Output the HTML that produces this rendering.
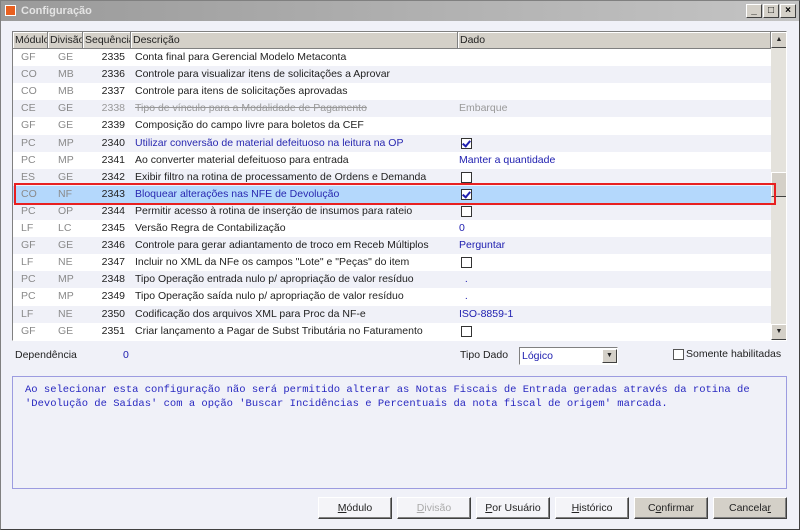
<!DOCTYPE html>
<html><head><meta charset="utf-8"><style>
*{box-sizing:border-box;margin:0;padding:0}
body{width:800px;height:530px;overflow:hidden;background:#f0f1f8;font-family:"Liberation Sans",sans-serif;font-size:10.5px;color:#222;position:relative}
.abs{position:absolute}
#win{left:0;top:0;width:800px;height:530px;border:1px solid #808080;border-right-color:#404040;border-bottom-color:#404040}
#title{left:1px;top:1px;width:798px;height:20px;background:linear-gradient(90deg,#9a9a9a,#c4c4c4);color:#e4e4e4;font-weight:bold;font-size:11px;line-height:20px;padding-left:20px}
.ticon{left:5px;top:5px;width:11px;height:11px;background:#e86020;border:1px solid #fff}
.tb{top:4px;width:16px;height:14px;background:#d4d0c8;border:1px solid;border-color:#fff #404040 #404040 #fff;font-size:10px;line-height:12px;text-align:center;color:#000;font-weight:bold}
#grid{left:12px;top:31px;width:775px;height:310px;border:1px solid;border-color:#808080 #fff #fff #808080;background:#fff;overflow:hidden}
.hd{top:0;height:17px;background:#d4d0c8;border-right:1px solid #808080;border-bottom:1px solid #808080;line-height:16px;padding-left:2px;box-shadow:inset 1px 1px #fff;white-space:nowrap;overflow:hidden}
.row{left:0;width:758px;height:17.1px;line-height:17px}
.row span{position:absolute;white-space:nowrap}
.c1{left:8px;color:#8a8a8a}.c2{left:45px;color:#8a8a8a}.c3{left:70px;width:42px;text-align:right}.c4{left:122px}.c5{left:446px;color:#2020b0}
.cb{position:absolute;left:448px;top:3px;width:11px;height:11px;border:1px solid #333;background:#fff}
.cb.on::after{content:"";position:absolute;left:2px;top:0px;width:3px;height:6px;border:solid #2020b0;border-width:0 2px 2px 0;transform:rotate(40deg)}
.btn{top:497px;width:74px;height:22px;border:1px solid;border-color:#fff #404040 #404040 #fff;background:#f4f4f8;text-align:center;line-height:20px;box-shadow:inset -1px -1px #808080}
</style></head><body>
<div id="win" class="abs"></div>
<div id="title" class="abs">Configuração</div>
<div class="abs ticon"></div>
<div class="abs tb" style="left:746px">_</div><div class="abs tb" style="left:763px">□</div><div class="abs tb" style="left:780px">×</div>
<div id="grid" class="abs">
<div class="abs hd" style="left:0;width:35px">Módulo</div>
<div class="abs hd" style="left:35px;width:35px">Divisão</div>
<div class="abs hd" style="left:70px;width:48px">Sequência</div>
<div class="abs hd" style="left:118px;width:327px">Descrição</div>
<div class="abs hd" style="left:445px;width:313px">Dado</div>
<div class="abs" style="left:758px;top:0;width:16px;height:310px;background:#e4e2dc"></div>
<div class="abs" style="left:758px;top:0;width:16px;height:16px;background:#d4d0c8;border:1px solid;border-color:#fff #404040 #404040 #fff;font-size:7px;text-align:center;line-height:14px">▲</div>
<div class="abs" style="left:758px;top:140px;width:16px;height:25px;background:#d4d0c8;border:1px solid;border-color:#fff #404040 #404040 #fff"></div>
<div class="abs" style="left:758px;top:292px;width:16px;height:16px;background:#d4d0c8;border:1px solid;border-color:#fff #404040 #404040 #fff;font-size:7px;text-align:center;line-height:14px">▼</div>
<div id="rows"></div>
</div>
<div class="abs" style="left:14px;top:183px;width:762px;height:22px;border:2px solid #e82020"></div>
<div class="abs" style="left:15px;top:349px">Dependência</div>
<div class="abs" style="left:123px;top:349px;color:#2020b0">0</div>
<div class="abs" style="left:460px;top:349px">Tipo Dado</div>
<div class="abs" style="left:519px;top:347px;width:99px;height:18px;background:#fff;border:1px solid;border-color:#808080 #fff #fff #808080;color:#2020b0;line-height:16px;padding-left:2px">Lógico</div>
<div class="abs" style="left:602px;top:349px;width:15px;height:14px;background:#d4d0c8;border:1px solid;border-color:#fff #404040 #404040 #fff;font-size:7px;text-align:center;line-height:12px">▼</div>
<div class="abs" style="left:673px;top:349px;width:11px;height:11px;border:1px solid #555;background:#fff"></div>
<div class="abs" style="left:686px;top:348px">Somente habilitadas</div>
<div class="abs" style="left:12px;top:376px;width:775px;height:113px;border:1px solid #9c9ce0;background:#f0f1f8;font-family:'Liberation Mono',monospace;font-size:10.5px;color:#2828c0;padding:6px 0 0 12px;line-height:14px;white-space:pre">Ao selecionar esta configuração não será permitido alterar as Notas Fiscais de Entrada geradas através da rotina de
'Devolução de Saídas' com a opção 'Buscar Incidências e Percentuais da nota fiscal de origem' marcada.</div>
<div class="abs btn" style="left:318px"><u>M</u>ódulo</div>
<div class="abs btn" style="left:397px;color:#aaa"><u>D</u>ivisão</div>
<div class="abs btn" style="left:476px"><u>P</u>or Usuário</div>
<div class="abs btn" style="left:555px"><u>H</u>istórico</div>
<div class="abs btn" style="left:634px;background:#d4d0c8">C<u>o</u>nfirmar</div>
<div class="abs btn" style="left:713px;background:#d4d0c8">Cancela<u>r</u></div>
<script>
var d=[["GF","GE","2335","Conta final para Gerencial Modelo Metaconta",""],
["CO","MB","2336","Controle para visualizar itens de solicitações a Aprovar",""],
["CO","MB","2337","Controle para itens de solicitações aprovadas",""],
["CE","GE","2338","Tipo de vínculo para a Modalidade de Pagamento","Embarque","s"],
["GF","GE","2339","Composição do campo livre para boletos da CEF",""],
["PC","MP","2340","Utilizar conversão de material defeituoso na leitura na OP","#1","b"],
["PC","MP","2341","Ao converter material defeituoso para entrada","Manter a quantidade"],
["ES","GE","2342","Exibir filtro na rotina de processamento de Ordens e Demanda","#0"],
["CO","NF","2343","Bloquear alterações nas NFE de Devolução","#1","b"],
["PC","OP","2344","Permitir acesso à rotina de inserção de insumos para rateio","#0"],
["LF","LC","2345","Versão Regra de Contabilização","0"],
["GF","GE","2346","Controle para gerar adiantamento de troco em Receb Múltiplos","Perguntar"],
["LF","NE","2347","Incluir no XML da NFe os campos \"Lote\" e \"Peças\" do item","#0"],
["PC","MP","2348","Tipo Operação entrada nulo p/ apropriação de valor resíduo","  ."],
["PC","MP","2349","Tipo Operação saída nulo p/ apropriação de valor resíduo","  ."],
["LF","NE","2350","Codificação dos arquivos XML para Proc da NF-e","ISO-8859-1"],
["GF","GE","2351","Criar lançamento a Pagar de Subst Tributária no Faturamento","#0"]];
var h="";d.forEach(function(r,i){var bg=i==8?"#b4d8fc":(i%2?"#f0f1f8":"#fff");
var st=r[5]=="s"?"color:#999;text-decoration:line-through":(r[5]=="b"?"color:#2828b0":"");
var v=r[4];var dv=v[0]=="#"?'<i class="cb'+(v=="#1"?" on":"")+'"></i>':'<span class="c5" style="'+(r[5]=="s"?"color:#999":"")+'">'+v.replace(/ /g,"&nbsp;")+'</span>';
h+='<div class="abs row" style="top:'+(17+i*17.1)+'px;background:'+bg+'"><span class="c1">'+r[0]+'</span><span class="c2">'+r[1]+'</span><span class="c3" style="'+(r[5]=="s"?"color:#999":"")+'">'+r[2]+'</span><span class="c4" style="'+st+'">'+r[3]+'</span>'+dv+'</div>';});
document.getElementById("rows").innerHTML=h;
</script>
</body></html>
